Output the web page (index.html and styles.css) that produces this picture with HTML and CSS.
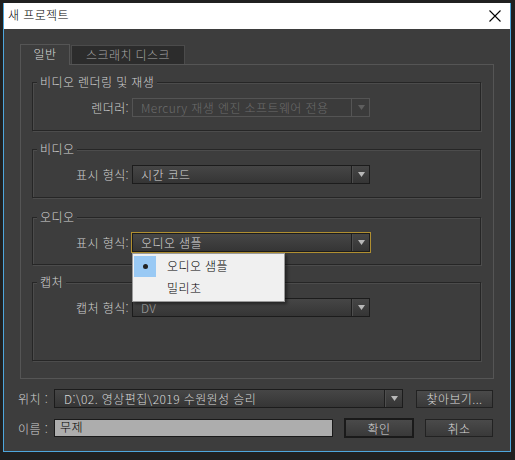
FILE: index.html
```html
<!DOCTYPE html>
<html lang="ko">
<head>
<meta charset="utf-8">
<title>새 프로젝트</title>
<link rel="stylesheet" href="styles.css">
</head>
<body>
<div class="window">
  <div class="titlebar">
    <span class="title">새 프로젝트</span>
    <svg class="close" width="12" height="12" viewBox="0 0 12 12"><path d="M0.5 0.5L11.5 11.5M11.5 0.5L0.5 11.5" stroke="#000" stroke-width="1.1" fill="none"/></svg>
  </div>
  <div class="content">
    <div class="tabs">
      <div class="tab active">일반</div>
      <div class="tab">스크래치 디스크</div>
    </div>
    <div class="panel">
      <div class="group g1">
        <div class="legend">비디오 렌더링 및 재생</div>
        <div class="row">
          <span class="label">렌더러:</span>
          <div class="combo disabled">
            <span class="combo-text">Mercury 재생 엔진 소프트웨어 전용</span>
            <span class="combo-btn"><svg width="7" height="5" viewBox="0 0 7 5"><path d="M0 0H7L3.5 5Z" fill="#5e5e5e"/></svg></span>
          </div>
        </div>
      </div>
      <div class="group g2">
        <div class="legend">비디오</div>
        <div class="row">
          <span class="label">표시 형식:</span>
          <div class="combo">
            <span class="combo-text">시간 코드</span>
            <span class="combo-btn"><svg width="7" height="5" viewBox="0 0 7 5"><path d="M0 0H7L3.5 5Z" fill="#b8b8b8"/></svg></span>
          </div>
        </div>
      </div>
      <div class="group g3">
        <div class="legend">오디오</div>
        <div class="row">
          <span class="label">표시 형식:</span>
          <div class="combo focus">
            <span class="combo-text">오디오 샘플</span>
            <span class="combo-btn"><svg width="7" height="5" viewBox="0 0 7 5"><path d="M0 0H7L3.5 5Z" fill="#b8b8b8"/></svg></span>
            <div class="popup">
              <div class="item"><span class="check on"><span class="dot"></span></span><span class="item-text">오디오 샘플</span></div>
              <div class="item"><span class="check"></span><span class="item-text">밀리초</span></div>
            </div>
          </div>
        </div>
      </div>
      <div class="group g4">
        <div class="legend">캡처</div>
        <div class="row">
          <span class="label">캡처 형식:</span>
          <div class="combo">
            <span class="combo-text dim">DV</span>
            <span class="combo-btn"><svg width="7" height="5" viewBox="0 0 7 5"><path d="M0 0H7L3.5 5Z" fill="#b8b8b8"/></svg></span>
          </div>
        </div>
      </div>
    </div>
    <div class="brow r1">
      <span class="blabel">위치 :</span>
      <div class="combo path">
        <span class="combo-text">D:\02. 영상편집\2019 수원원성 승리</span>
        <span class="combo-btn"><svg width="7" height="5" viewBox="0 0 7 5"><path d="M0 0H7L3.5 5Z" fill="#b8b8b8"/></svg></span>
      </div>
      <button class="btn browse">찾아보기...</button>
    </div>
    <div class="brow r2">
      <span class="blabel">이름 :</span>
      <div class="input">무제</div>
      <button class="btn ok">확인</button>
      <button class="btn cancel">취소</button>
    </div>
  </div>
</div>
</body>
</html>
```
FILE: styles.css
```css
html, body {
  margin: 0;
  padding: 0;
}
body {
  background: #202020;
  padding: 3px 4px 8px 3px;
  font-family: "Noto Sans CJK KR", "Noto Sans", sans-serif;
  font-size: 12px;
  font-weight: 300;
  letter-spacing: 0.4px;
  color: #d0d0d0;
}
.window {
  width: 508px;
  height: 449px;
  box-sizing: border-box;
  border: 1px solid #4ea6dc;
  border-top: none;
  background: #3d3d3d;
  display: flex;
  flex-direction: column;
}
.titlebar {
  height: 26px;
  background: #ffffff;
  display: flex;
  align-items: center;
  justify-content: space-between;
  padding: 0 9px 0 4px;
  flex: none;
}
.title {
  color: #000;
  font-size: 12px;
  line-height: 16px;
  margin-top: -2px;
}
.close {
  display: block;
  margin-top: -1px;
}
.content {
  padding: 15px 0 0 14px;
}
.tabs {
  display: flex;
  align-items: flex-end;
  margin-left: 2px;
  height: 20px;
  position: relative;
  z-index: 1;
}
.tab {
  box-sizing: border-box;
  height: 19px;
  width: 114px;
  background: #2c2c2c;
  border: 1px solid #4b4b4b;
  border-bottom: none;
  color: #a6a6a6;
  text-align: center;
  line-height: 17px;
}
.tab.active {
  width: 50px;
  height: 21px;
  margin-bottom: -1px;
  background: #3d3d3d;
  border-color: #555;
  color: #dcdcdc;
  line-height: 18px;
  margin-right: 1px;
}
.panel {
  margin-left: 2px;
  width: 474px;
  height: 315px;
  box-sizing: border-box;
  border: 1px solid #555;
  padding: 17px 0 0 11px;
}
.group {
  width: 449px;
  box-sizing: border-box;
  border: 1px solid #262626;
  box-shadow: 1px 1px 0 #4c4c4c, inset 1px 1px 0 #4c4c4c;
  padding: 0 0 13px 0;
}
.g2 { margin-top: 18px; }
.g3 { margin-top: 19px; padding-bottom: 12px; }
.g4 { margin-top: 17px; padding-bottom: 43px; }
.legend {
  width: fit-content;
  margin: -9px 0 0 4px;
  padding: 0 3px;
  height: 16px;
  line-height: 16px;
  background: #3d3d3d;
  color: #d2d2d2;
}
.row {
  display: flex;
  align-items: center;
  margin-top: 8px;
  height: 19px;
}
.label {
  width: 96px;
  text-align: right;
  margin-right: 3px;
  color: #cfcfcf;
  white-space: nowrap;
}
.combo {
  position: relative;
  display: flex;
  width: 238px;
  height: 19px;
  box-sizing: border-box;
  border: 1px solid #1c1c1c;
  background: linear-gradient(#464646, #353535);
}
.combo-text {
  flex: 1;
  padding-left: 8px;
  line-height: 17px;
  color: #d8d8d8;
  white-space: nowrap;
  overflow: hidden;
}
.combo-text.dim {
  color: #a4a4a4;
}
.combo-btn {
  width: 16px;
  border-left: 1px solid #1e1e1e;
  box-shadow: inset 1px 0 0 #4e4e4e;
  display: flex;
  align-items: center;
  justify-content: center;
  padding-left: 1px;
}
.combo.disabled {
  border-color: #545454;
  background: #3b3b3b;
}
.combo.disabled .combo-text {
  color: #6c6c6c;
}
.combo.disabled .combo-btn {
  border-left-color: #555;
  box-shadow: none;
}
.combo.focus {
  box-shadow: 0 0 0 1px #b08f31;
}
.popup {
  position: absolute;
  top: 19px;
  left: -1px;
  width: 153px;
  height: 49px;
  box-sizing: border-box;
  background: #f0f0f0;
  border: 1px solid #9a9a9a;
  box-shadow: 2px 2px 3px rgba(0, 0, 0, 0.45);
  padding-top: 1px;
  z-index: 5;
}
.item {
  display: flex;
  align-items: center;
  height: 22px;
}
.check {
  width: 22px;
  height: 21px;
  margin-left: 1px;
  display: flex;
  align-items: center;
  justify-content: center;
}
.check.on {
  background: #99c9f4;
}
.dot {
  width: 5px;
  height: 5px;
  border-radius: 50%;
  background: #222;
}
.item-text {
  margin-left: 11px;
  color: #000;
  line-height: 16px;
}
.brow {
  display: flex;
  align-items: center;
}
.r1 {
  margin-top: 10px;
  height: 19px;
}
.r2 {
  margin-top: 10px;
  height: 20px;
}
.blabel {
  width: 36px;
  color: #cfcfcf;
  white-space: nowrap;
}
.combo.path {
  width: 349px;
}
.combo.path .combo-text {
  padding-left: 9px;
}
.btn {
  box-sizing: border-box;
  height: 18px;
  padding: 0;
  border: 1px solid #222;
  background: linear-gradient(#4a4a4a, #393939);
  color: #dadada;
  font-family: "Noto Sans CJK KR", "Noto Sans", sans-serif;
  font-size: 12px;
  font-weight: 300;
  letter-spacing: 0.4px;
  line-height: 15px;
}
.browse {
  width: 77px;
  margin-left: 13px;
}
.input {
  width: 279px;
  height: 18px;
  box-sizing: border-box;
  background: #adadad;
  border: 1px solid #1a1a1a;
  color: #000;
  padding-left: 5px;
  line-height: 13px;
}
.ok {
  width: 70px;
  height: 20px;
  margin-left: 11px;
  border: 2px solid #1a1a1a;
}
.cancel {
  width: 68px;
  margin-left: 11px;
}
```
